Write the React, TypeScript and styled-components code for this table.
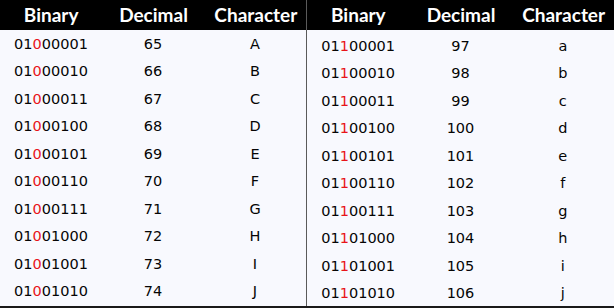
import React from 'react';
import styled, { createGlobalStyle } from 'styled-components';

interface Row {
  bin: string;
  dec: number;
  chr: string;
}

const upper: Row[] = Array.from({ length: 10 }, (_, i) => ({
  bin: (65 + i).toString(2).padStart(8, '0'),
  dec: 65 + i,
  chr: String.fromCharCode(65 + i),
}));

const lower: Row[] = Array.from({ length: 10 }, (_, i) => ({
  bin: (97 + i).toString(2).padStart(8, '0'),
  dec: 97 + i,
  chr: String.fromCharCode(97 + i),
}));

const GlobalStyle = createGlobalStyle`
  html, body {
    margin: 0;
    padding: 0;
    background: #ffffff;
  }
`;

const Sheet = styled.div`
  width: 614px;
  height: 306px;
  display: grid;
  grid-template-columns: 306px 1px 307px;
  background: #f8f9fe;
  border-bottom: 2px solid #1a1a1a;
  box-sizing: content-box;
`;

const Divider = styled.div`
  background: #5a5a5a;
`;

const Panel = styled.div<{ $shift: number }>`
  display: grid;
  grid-template-rows: 30px repeat(10, 1fr);
  padding-bottom: 1px;
  & > div:nth-child(n + 2) {
    transform: translateY(${(p) => p.$shift}px);
  }
`;

const Head = styled.div`
  display: grid;
  grid-template-columns: 1fr 1fr 1fr;
  align-items: center;
  background: #000;
  color: #fff;
  font-family: Lato, 'Open Sans', sans-serif;
  font-weight: 700;
  font-size: 19px;
  margin-right: -1px;
`;

const HeadCell = styled.div`
  text-align: center;
  padding-bottom: 1px;
`;

const DataRow = styled.div`
  display: grid;
  grid-template-columns: 1fr 1fr 1fr;
  align-items: center;
  font-family: 'DejaVu Sans', Verdana, sans-serif;
  font-size: 14.5px;
  color: #050505;
`;

const Cell = styled.div`
  text-align: center;
`;

const Flag = styled.span`
  color: #e8141a;
`;

const Table: React.FC<{ rows: Row[]; shift: number }> = ({ rows, shift }) => (
  <Panel $shift={shift}>
    <Head>
      <HeadCell>Binary</HeadCell>
      <HeadCell>Decimal</HeadCell>
      <HeadCell>Character</HeadCell>
    </Head>
    {rows.map((r) => (
      <DataRow key={r.dec}>
        <Cell>
          {r.bin.slice(0, 2)}
          <Flag>{r.bin[2]}</Flag>
          {r.bin.slice(3)}
        </Cell>
        <Cell>{r.dec}</Cell>
        <Cell>{r.chr}</Cell>
      </DataRow>
    ))}
  </Panel>
);

export default function App() {
  return (
    <>
      <GlobalStyle />
      <Sheet>
        <Table rows={upper} shift={0} />
        <Divider />
        <Table rows={lower} shift={2} />
      </Sheet>
    </>
  );
}
